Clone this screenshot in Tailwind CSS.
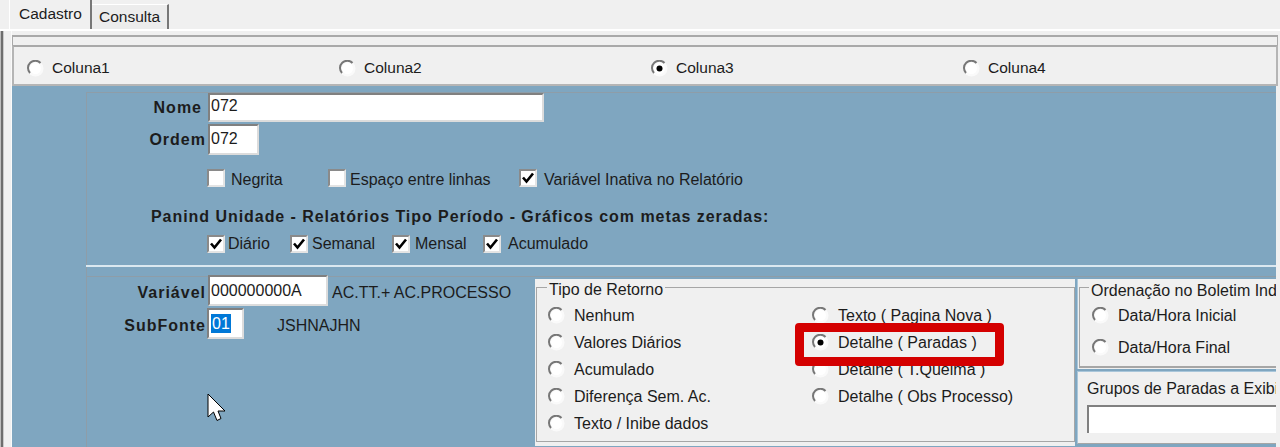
<!DOCTYPE html>
<html lang="pt">
<head>
  <meta charset="UTF-8" />
  <title>Cadastro</title>
  <script src="https://cdn.jsdelivr.net/npm/@tailwindcss/browser@4"></script>
</head>
<body class="relative w-[1280px] h-[447px] overflow-hidden bg-[#f0f0f0] font-['Liberation_Sans',sans-serif] text-[16px] leading-none text-[#1c1c1c]">
  <svg class="hidden">
    <symbol id="radio" viewBox="0 0 17 17">
      <circle cx="8.5" cy="8.5" r="8" fill="#fafafa" />
      <circle cx="8.5" cy="8.5" r="5.5" fill="#fff" />
      <path d="M3 13 A7 7 0 0 1 13.5 3" fill="none" stroke="#777" stroke-width="2" />
    </symbol>
    <symbol id="radio-on" viewBox="0 0 17 17">
      <circle cx="8.5" cy="8.5" r="8" fill="#fafafa" />
      <circle cx="8.5" cy="8.5" r="5.5" fill="#fff" />
      <path d="M3 13 A7 7 0 0 1 13.5 3" fill="none" stroke="#777" stroke-width="2" />
      <circle cx="8.5" cy="8.5" r="3" fill="#000" />
    </symbol>
    <symbol id="tick" viewBox="0 0 14 14">
      <path d="M2 6.5 L5.5 10.5 L12 2.5" fill="none" stroke="#000" stroke-width="2.6" />
    </symbol>
  </svg>

  <!-- Tabs -->
  <div class="flex items-end h-[31px] pl-[9px] border-b-2 border-white">
    <div class="flex items-center w-[83px] h-[30px] pl-[9px] pb-[1px] border-l border-t border-white border-r-2 border-r-[#777] text-[15.5px]">Cadastro</div>
    <div class="flex items-center w-[77px] h-[25px] pl-[7px] border-t border-white border-r-2 border-r-[#777] text-[15.5px] bg-[#ececec]">Consulta</div>
  </div>

  <div class="flex h-[416px]">
    <!-- Window edge -->
    <div class="w-[11px] shrink-0 flex">
      <div class="w-[1px] bg-[#bdbdbd]"></div>
      <div class="w-[2px] bg-[#6d6d6d]"></div>
      <div class="w-[1px] bg-[#c9c9c9]"></div>
    </div>

    <div class="w-[1267px] flex flex-col border-l border-[#fafafa]">
      <!-- Coluna radios -->
      <div class="mt-[4px] h-[10px] border-t-2 border-l border-r border-[#a9a9a9]"></div>
      <div class="flex items-center h-[41px] pt-[5px] border-2 border-[#b5b5b5] border-t-[#a9a9a9] text-[15.5px]">
        <div class="flex items-center w-[313px] pl-[13px] gap-[8px]"><svg class="w-[17px] h-[17px]"><use href="#radio" /></svg>Coluna1</div>
        <div class="flex items-center w-[312px] pl-[12px] gap-[8px]"><svg class="w-[17px] h-[17px]"><use href="#radio" /></svg>Coluna2</div>
        <div class="flex items-center w-[312px] pl-[12px] gap-[8px]"><svg class="w-[17px] h-[17px]"><use href="#radio-on" /></svg>Coluna3</div>
        <div class="flex items-center w-[312px] pl-[12px] gap-[8px]"><svg class="w-[17px] h-[17px]"><use href="#radio" /></svg>Coluna4</div>
      </div>

      <!-- Blue form -->
      <div class="flex-1 flex w-[1264px] bg-[#7fa6c0] overflow-hidden">
        <div class="w-[74px] shrink-0"></div>
        <div class="flex-1 mt-[6px] border-l border-t border-[#8e9da8] flex flex-col">
          <div class="flex items-center h-[29px]">
            <span class="w-[115px] text-right font-bold tracking-[1px]">Nome</span>
            <div class="ml-[6px] w-[336px] h-[29px] flex items-center pl-[1px] pb-[3px] bg-white border-t-2 border-l-2 border-[#808080] border-b-2 border-b-[#dcdcdc] border-r-2 border-r-[#dcdcdc]">072</div>
          </div>
          <div class="flex items-center h-[31px] mt-[2px]">
            <span class="w-[119px] text-right font-bold tracking-[1px]">Ordem</span>
            <div class="ml-[2px] w-[51px] h-[31px] flex items-center pl-[1px] pb-[2px] bg-white border-t-2 border-l-2 border-[#808080] border-b-2 border-b-[#dcdcdc] border-r-2 border-r-[#dcdcdc]">072</div>
          </div>

          <div class="flex items-center h-[18px] mt-[14px] pl-[120px]">
            <div class="flex items-center w-[121px]">
              <div class="w-[18px] h-[18px] bg-white border-t-2 border-l-2 border-[#8a8a8a] border-b-2 border-b-[#e4e4e4] border-r-2 border-r-[#e4e4e4]"></div>
              <span class="ml-[6px] pt-[4px]">Negrita</span>
            </div>
            <div class="flex items-center w-[191px]">
              <div class="w-[18px] h-[18px] bg-white border-t-2 border-l-2 border-[#8a8a8a] border-b-2 border-b-[#e4e4e4] border-r-2 border-r-[#e4e4e4]"></div>
              <span class="ml-[4px] pt-[4px]">Espaço entre linhas</span>
            </div>
            <div class="flex items-center">
              <div class="w-[18px] h-[18px] bg-white border-t-2 border-l-2 border-[#8a8a8a] border-b-2 border-b-[#e4e4e4] border-r-2 border-r-[#e4e4e4]"><svg class="w-[14px] h-[14px]"><use href="#tick" /></svg></div>
              <span class="ml-[7px] pt-[4px]">Variável Inativa no Relatório</span>
            </div>
          </div>

          <div class="h-[18px] mt-[21px] pl-[64px] flex items-center font-bold tracking-[0.95px]">Panind Unidade - Relatórios Tipo Período - Gráficos com metas zeradas:</div>

          <div class="flex items-center h-[18px] mt-[9px] pl-[120px]">
            <div class="flex items-center w-[83px]">
              <div class="w-[18px] h-[18px] bg-white border-t-2 border-l-2 border-[#8a8a8a] border-b-2 border-b-[#e4e4e4] border-r-2 border-r-[#e4e4e4]"><svg class="w-[14px] h-[14px]"><use href="#tick" /></svg></div>
              <span class="ml-[3px]">Diário</span>
            </div>
            <div class="flex items-center w-[102px]">
              <div class="w-[18px] h-[18px] bg-white border-t-2 border-l-2 border-[#8a8a8a] border-b-2 border-b-[#e4e4e4] border-r-2 border-r-[#e4e4e4]"><svg class="w-[14px] h-[14px]"><use href="#tick" /></svg></div>
              <span class="ml-[4px]">Semanal</span>
            </div>
            <div class="flex items-center w-[91px]">
              <div class="w-[18px] h-[18px] bg-white border-t-2 border-l-2 border-[#8a8a8a] border-b-2 border-b-[#e4e4e4] border-r-2 border-r-[#e4e4e4]"><svg class="w-[14px] h-[14px]"><use href="#tick" /></svg></div>
              <span class="ml-[5px]">Mensal</span>
            </div>
            <div class="flex items-center">
              <div class="w-[18px] h-[18px] bg-white border-t-2 border-l-2 border-[#8a8a8a] border-b-2 border-b-[#e4e4e4] border-r-2 border-r-[#e4e4e4]"><svg class="w-[14px] h-[14px]"><use href="#tick" /></svg></div>
              <span class="ml-[7px]">Acumulado</span>
            </div>
          </div>

          <div class="h-[2px] mt-[12px] -ml-[1px] bg-[#dbe8f0]"></div>

          <!-- Lower area -->
          <div class="flex flex-1 mt-[9px] border-t border-[#8e9da8] pt-[2px] -ml-[1px]">
            <div class="w-[449px] shrink-0">
              <div class="flex items-center h-[31px] -mt-[4px]">
                <span class="w-[120px] pt-[4px] text-right font-bold tracking-[1px]">Variável</span>
                <div class="ml-[2px] w-[120px] h-[31px] flex items-center pl-[1px] bg-white border-t-2 border-l-2 border-[#808080] border-b-2 border-b-[#dcdcdc] border-r-2 border-r-[#dcdcdc]">000000000A</div>
                <span class="ml-[4px] pt-[4px]">AC.TT.+ AC.PROCESSO</span>
              </div>
              <div class="flex items-center h-[31px] mt-[2px]">
                <span class="w-[120px] pt-[4px] text-right font-bold tracking-[1px]">SubFonte</span>
                <div class="ml-[1px] w-[37px] h-[31px] flex items-center pl-[2px] bg-white border-t-2 border-l-2 border-[#808080] border-b-2 border-b-[#dcdcdc] border-r-2 border-r-[#dcdcdc]"><span class="flex items-center justify-center w-[20px] h-[19px] bg-[#0078d7] text-white">01</span></div>
                <span class="ml-[33px] pt-[4px]">JSHNAJHN</span>
              </div>
            </div>

            <!-- Tipo de Retorno -->
            <div class="w-[540px] shrink-0 h-[167px] bg-[#f0f0f0] pl-[1px] pt-[8px] pb-[4px]">
              <div class="relative h-[155px] border border-[#a6a6a6] pt-[14px] pl-[11px] grid grid-cols-[264px_1fr] auto-rows-[27px]">
                <span class="absolute -top-[6px] left-[10px] px-[2px] bg-[#f0f0f0]">Tipo de Retorno</span>
                <div class="flex items-center gap-[9px]"><svg class="w-[17px] h-[17px]"><use href="#radio" /></svg>Nenhum</div>
                <div class="flex items-center gap-[9px]"><svg class="w-[17px] h-[17px]"><use href="#radio" /></svg>Texto ( Pagina Nova )</div>
                <div class="flex items-center gap-[9px]"><svg class="w-[17px] h-[17px]"><use href="#radio" /></svg>Valores Diários</div>
                <div class="flex items-center gap-[9px]"><svg class="w-[17px] h-[17px]"><use href="#radio-on" /></svg>Detalhe ( Paradas )</div>
                <div class="flex items-center gap-[9px]"><svg class="w-[17px] h-[17px]"><use href="#radio" /></svg>Acumulado</div>
                <div class="flex items-center gap-[9px]"><svg class="w-[17px] h-[17px]"><use href="#radio" /></svg>Detalhe ( T.Queima )</div>
                <div class="flex items-center gap-[9px]"><svg class="w-[17px] h-[17px]"><use href="#radio" /></svg>Diferença Sem. Ac.</div>
                <div class="flex items-center gap-[9px]"><svg class="w-[17px] h-[17px]"><use href="#radio" /></svg>Detalhe ( Obs Processo)</div>
                <div class="flex items-center gap-[9px]"><svg class="w-[17px] h-[17px]"><use href="#radio" /></svg>Texto / Inibe dados</div>
              </div>
            </div>

            <!-- Right column -->
            <div class="ml-[2px] w-[199px] shrink-0 flex flex-col gap-[2px] overflow-hidden whitespace-nowrap">
              <div class="h-[90px] bg-[#f0f0f0] border-l border-[#a9c6da] pl-[1px] pt-[8px]">
                <div class="relative h-[81px] border-l border-t border-b-2 border-[#a6a6a6]">
                  <span class="absolute -top-[5px] left-[9px] px-[2px] bg-[#f0f0f0]">Ordenação no Boletim Ind</span>
                  <div class="flex items-center gap-[9px] h-[17px] mt-[19px] ml-[12px]"><svg class="w-[17px] h-[17px]"><use href="#radio" /></svg>Data/Hora Inicial</div>
                  <div class="flex items-center gap-[9px] h-[17px] mt-[15px] ml-[12px]"><svg class="w-[17px] h-[17px]"><use href="#radio" /></svg>Data/Hora Final</div>
                </div>
              </div>
              <div class="h-[73px] bg-[#f0f0f0] border-l border-t border-b border-[#a9c6da] border-b-[#a6a6a6] pl-[9px] pt-[9px]">
                <div>Grupos de Paradas a Exibi</div>
                <div class="mt-[8px] h-[28px] bg-white border-t-2 border-l-2 border-[#808080]"></div>
              </div>
            </div>
          </div>
        </div>
      </div>
    </div>
  </div>

  <!-- Annotation and pointer drawn over the capture -->
  <div class="absolute left-[795px] top-[323px] w-[209px] h-[43px] border-[9px] border-[#d40000] rounded-[4px]"></div>
  <svg class="absolute left-[207px] top-[393px] w-[20px] h-[30px]" viewBox="0 0 20 30">
    <path d="M1 1 V24 L6.5 19 L10 27.5 L14 25.5 L11 18 H18 Z" fill="#fff" stroke="#000" stroke-width="1" />
  </svg>
</body>
</html>
